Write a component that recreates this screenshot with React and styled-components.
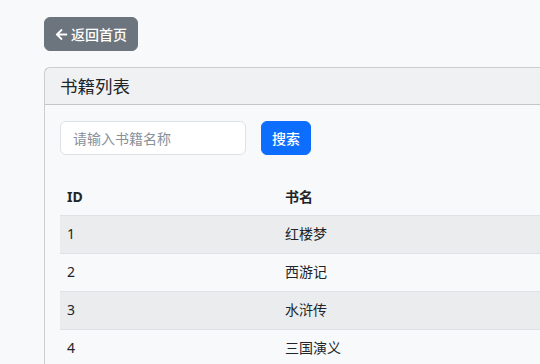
import React from "react";
import styled, { createGlobalStyle } from "styled-components";
import { FaArrowLeft } from "react-icons/fa";

const Global = createGlobalStyle`
  html, body { margin: 0; padding: 0; }
  body {
    background: #f8f9fa;
    font-family: "Noto Sans", "Noto Sans CJK SC", sans-serif;
    font-size: 14px;
    line-height: 1.5;
    color: #212529;
    overflow: hidden;
  }
`;

const Page = styled.div`
  padding: 17px 0 0 44px;
  display: flex;
  flex-direction: column;
  align-items: flex-start;
  gap: 16px;
`;

const BackButton = styled.button`
  display: inline-flex;
  align-items: center;
  gap: 3px;
  height: 34px;
  padding: 0 10px;
  background: #6c757d;
  color: #fff;
  border: 1px solid #6c757d;
  border-radius: 6px;
  font: inherit;
  font-weight: 500;
  svg { font-size: 13px; }
`;

const Card = styled.div`
  width: 900px;
  border: 1px solid rgba(0, 0, 0, 0.175);
  border-radius: 6px;
  background: #f8f9fa;
`;

const CardHeader = styled.div`
  padding: 8px 15px;
  font-size: 17.5px;
  line-height: 20px;
  background: rgba(0, 0, 0, 0.03);
  border-bottom: 1px solid rgba(0, 0, 0, 0.175);
`;

const CardBody = styled.div`
  padding: 16px 15px;
`;

const SearchRow = styled.div`
  display: flex;
  gap: 15px;
  margin-bottom: 23px;
`;

const Input = styled.input`
  width: 186px;
  height: 34px;
  box-sizing: border-box;
  padding: 6px 12px;
  border: 1px solid #dee2e6;
  border-radius: 6px;
  background: #fff;
  font: inherit;
  color: #212529;
  &::placeholder { color: #8a9097; }
`;

const SearchButton = styled.button`
  height: 34px;
  padding: 0 10px;
  background: #0d6efd;
  color: #fff;
  border: 1px solid #0d6efd;
  border-radius: 6px;
  font: inherit;
  font-weight: 500;
`;

const Table = styled.table`
  width: 100%;
  border-collapse: collapse;
`;

const Th = styled.th`
  text-align: left;
  font-weight: 700;
  padding: 8px 7px;
  border-bottom: 1px solid #dee2e6;
  width: ${(p) => p.$w || "auto"};
`;

const Tr = styled.tr`
  background: ${(p) => (p.$striped ? "rgba(0,0,0,0.05)" : "transparent")};
`;

const Td = styled.td`
  padding: 7px 7px 9px;
  border-bottom: 1px solid #dee2e6;
`;

const books = [
  [1, "红楼梦"],
  [2, "西游记"],
  [3, "水浒传"],
  [4, "三国演义"],
];

export default function App() {
  return (
    <>
      <Global />
      <Page>
        <BackButton>
          <FaArrowLeft />
          返回首页
        </BackButton>
        <Card>
          <CardHeader>书籍列表</CardHeader>
          <CardBody>
            <SearchRow>
              <Input placeholder="请输入书籍名称" />
              <SearchButton>搜索</SearchButton>
            </SearchRow>
            <Table>
              <thead>
                <tr>
                  <Th $w="204px">ID</Th>
                  <Th>书名</Th>
                </tr>
              </thead>
              <tbody>
                {books.map(([id, name], i) => (
                  <Tr key={id} $striped={i % 2 === 0}>
                    <Td>{id}</Td>
                    <Td>{name}</Td>
                  </Tr>
                ))}
              </tbody>
            </Table>
          </CardBody>
        </Card>
      </Page>
    </>
  );
}
